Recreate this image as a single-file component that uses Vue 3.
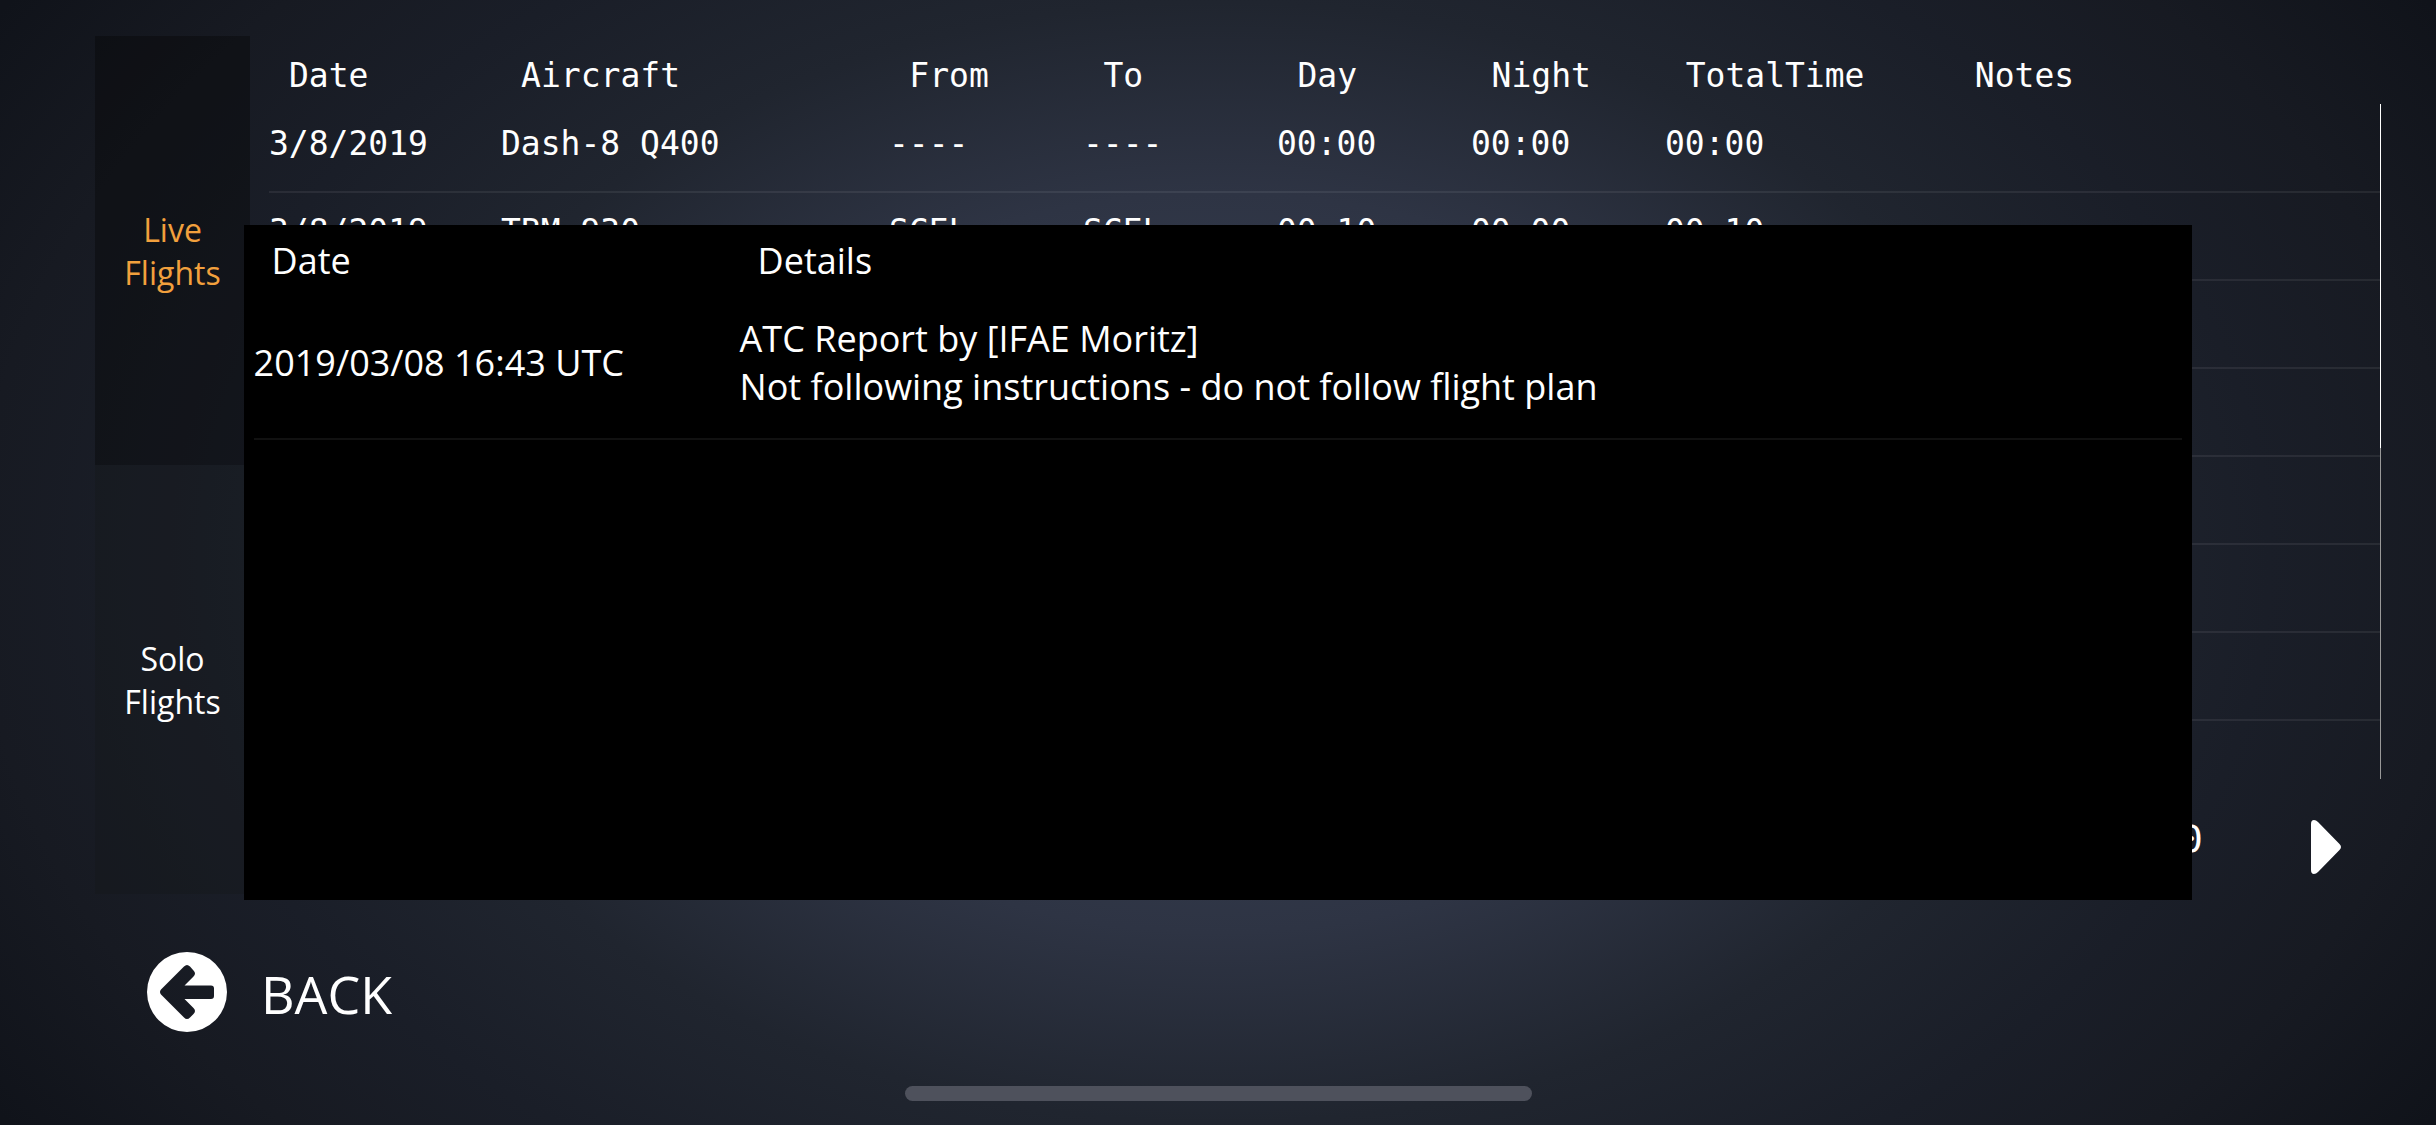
<script setup>
const columns = ['Date', 'Aircraft', 'From', 'To', 'Day', 'Night', 'TotalTime', 'Notes']

const flights = [
  ['3/8/2019', 'Dash-8 Q400', '----', '----', '00:00', '00:00', '00:00', ''],
  ['3/8/2019', 'TBM-930', 'SCEL', 'SCEL', '00:10', '00:00', '00:10', ''],
  ...Array.from({ length: 6 }, () => ['', '', '', '', '', '', '', '']),
]

const reports = [
  {
    date: '2019/03/08 16:43 UTC',
    lines: ['ATC Report by [IFAE Moritz]', 'Not following instructions - do not follow flight plan'],
  },
]
</script>

<template>
  <div class="screen">
    <main class="logbook">
      <nav class="tabs">
        <button type="button" class="tab active">Live<br />Flights</button>
        <button type="button" class="tab">Solo<br />Flights</button>
      </nav>
      <section class="log">
        <table class="flights">
          <thead>
            <tr>
              <th v-for="name in columns" :key="name" scope="col">{{ name }}</th>
            </tr>
          </thead>
          <tbody>
            <tr v-for="(flight, i) in flights" :key="i">
              <td v-for="(cell, j) in flight" :key="j">{{ cell }}</td>
            </tr>
          </tbody>
        </table>
        <div class="pager">
          <span class="total">00:00</span>
          <button type="button" class="next" aria-label="Next page">
            <svg viewBox="0 0 30 54" width="30" height="54">
              <path d="M0 4Q0 0 3 0Q5 0 7 2L28.500 24Q31.500 27 28.500 30L7 52Q5 54 3 54Q0 54 0 50Z" fill="#fff" />
            </svg>
          </button>
        </div>
      </section>
    </main>

    <footer class="footer">
      <button type="button" class="back">
        <svg viewBox="0 0 80 80" width="80" height="80" aria-hidden="true">
          <path
            fill="#fff"
            fill-rule="evenodd"
            d="M40 0A40 40 0 1 1 40 80A40 40 0 1 1 40 0ZM37 14.500L14 37.500Q12 40 14 42.500L37 65.500Q40 68.500 43 65.500L46.500 62Q49.500 59 46.500 56L37.500 47H64Q67 47 67 44V36.500Q67 33.500 64 33.500H37.500L46.500 24.500Q49.500 21.500 46.500 18.500L43 14.500Q40 11.500 37 14.500Z"
          />
        </svg>
        <span>BACK</span>
      </button>
    </footer>
    <div class="home-bar"></div>

    <div class="dialog" role="dialog" aria-label="Reports">
      <table class="reports">
        <thead>
          <tr>
            <th scope="col">Date</th>
            <th scope="col">Details</th>
          </tr>
        </thead>
        <tbody>
          <tr v-for="report in reports" :key="report.date">
            <td>{{ report.date }}</td>
            <td>
              <div v-for="line in report.lines" :key="line">{{ line }}</div>
            </td>
          </tr>
        </tbody>
      </table>
    </div>
  </div>
</template>

<style>
body {
  margin: 0;
  background: #10131a;
}
</style>

<style scoped>
.screen {
  position: relative;
  box-sizing: border-box;
  min-height: 100vh;
  display: flex;
  flex-direction: column;
  padding-top: 36px;
  background: radial-gradient(
    1460px 1000px at 50% 50%,
    #3c4558 0,
    #2e3444 37%,
    #20252f 56%,
    #1a1e28 72%,
    #171a22 85%,
    #10131a 100%
  );
  color: #fff;
  font-family: "Open Sans", "Noto Sans", sans-serif;
  font-size: 36px;
  font-weight: 370;
  line-height: 48px;
  overflow: hidden;
}

button {
  border: 0;
  padding: 0;
  background: none;
  color: inherit;
  font: inherit;
  cursor: pointer;
}

.logbook {
  display: flex;
  gap: 19px;
  height: 858px;
  padding: 0 55px 0 95px;
}

.tabs {
  flex: 0 0 155px;
  display: flex;
  flex-direction: column;
}

.tab {
  flex: 1;
  background: rgba(20, 24, 24, 0.3);
  font-size: 32px;
  line-height: 43px;
}

.tab.active {
  background: rgba(4, 5, 6, 0.38);
  color: #f2a03d;
}

.log {
  flex: 1;
  min-width: 0;
  display: flex;
  flex-direction: column;
}

.flights {
  display: block;
  font-family: "DejaVu Sans Mono", "Liberation Mono", monospace;
  font-size: 33px;
}

.flights thead,
.flights tbody {
  display: block;
}

.flights tr {
  display: grid;
  grid-template-columns: 232fr 388fr 194fr 194fr 194fr 194fr 289fr 426fr;
}

.flights th,
.flights td {
  padding: 0;
  text-align: left;
  font-weight: 400;
  white-space: nowrap;
}

.flights th {
  padding: 16px 0 4px 20px;
}

.flights tbody {
  box-sizing: border-box;
  height: 675px;
  padding-top: 1px;
  overflow: hidden;
  border-right: 1px solid;
  border-image: linear-gradient(#fff 51%, #999 51%) 1;
}

.flights tbody tr {
  box-sizing: border-box;
  height: 88px;
  padding-top: 15px;
  border-bottom: 2px solid rgba(255, 255, 255, 0.07);
}

.pager {
  flex: 1;
  display: flex;
  justify-content: flex-end;
  align-items: center;
  gap: 108px;
  padding: 20px 40px 0 0;
}

.total {
  padding-bottom: 16px;
  font-family: "DejaVu Sans Mono", "Liberation Mono", monospace;
  font-size: 38px;
}

.next svg,
.back svg {
  display: block;
}

.footer {
  padding: 58px 0 0 147px;
}

.back {
  display: flex;
  align-items: center;
  gap: 34px;
  font-size: 52px;
}

.back span {
  padding-top: 4px;
}

.home-bar {
  align-self: center;
  width: 627px;
  height: 15px;
  margin: auto 0 24px;
  border-radius: 8px;
  background: #4e515c;
}

.dialog {
  position: absolute;
  inset: 20% 10%;
  box-sizing: border-box;
  padding: 0 10px;
  background: #000;
}

.reports {
  width: 100%;
  border-collapse: collapse;
}

.reports th {
  padding: 12px 0 0 18px;
  text-align: left;
  font-weight: inherit;
}

.reports th:first-child {
  width: 468px;
}

.reports td {
  height: 150px;
  padding: 3px 0 0;
  border-bottom: 2px solid #111;
}
</style>
